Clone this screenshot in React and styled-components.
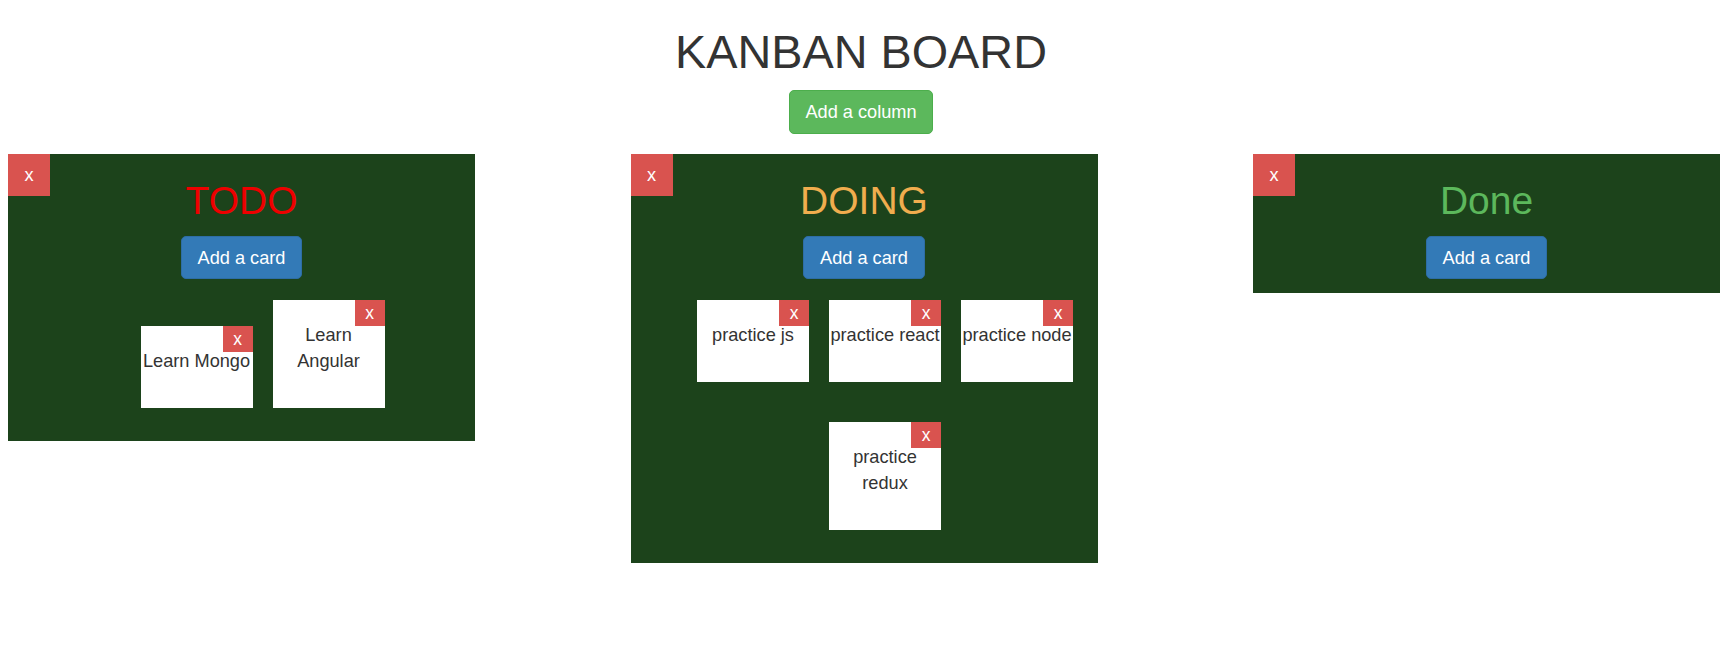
import React from 'react';
import styled, { createGlobalStyle } from 'styled-components';

const colors = {
	board_green: '#1c431b',
	text_black: '#333333',
	danger: '#d9534f',
	primary: '#337ab7',
	success: '#5cb85c',
	warning: '#f0ad4e',
	white: '#ffffff',
};

const columns = [
	{ id: 'todo', title: 'TODO', color: '#ee0000', cards: ['Learn Mongo', 'Learn Angular'] },
	{
		id: 'doing',
		title: 'DOING',
		color: colors.warning,
		cards: ['practice js', 'practice react', 'practice node', 'practice redux'],
	},
	{ id: 'done', title: 'Done', color: colors.success, cards: [] },
];

const GlobalStyle = createGlobalStyle`
	html, body {
		margin: 0;
		padding: 0;
		background: ${colors.white};
	}
	body {
		font-family: "Liberation Sans", Arial, Helvetica, sans-serif;
		color: ${colors.text_black};
	}
	* {
		box-sizing: border-box;
	}
`;

const App = () => {
	return (
		<Page>
			<GlobalStyle />
			<Header>
				<BoardTitle>KANBAN BOARD</BoardTitle>
				<Button $variant="success">Add a column</Button>
			</Header>
			<Board>
				{columns.map((col) => (
					<Column key={col.id}>
						<ColumnDelete>x</ColumnDelete>
						<ColumnTitle $color={col.color}>{col.title}</ColumnTitle>
						<Button $variant="primary">Add a card</Button>
						<CardList>
							{col.cards.map((text) => (
								<Card key={text}>
									<CardTop>
										<CardDelete>x</CardDelete>
									</CardTop>
									<CardText>{text}</CardText>
								</Card>
							))}
						</CardList>
					</Column>
				))}
			</Board>
		</Page>
	);
};
export default App;

const Page = styled.div`
	width: 1722px;
	min-height: 666px;
`;

const Header = styled.div`
	text-align: center;
	padding-bottom: 20px;
`;

const BoardTitle = styled.h1`
	margin: 27px 0 12px;
	font-size: 46.8px;
	font-weight: normal;
	line-height: 1.1;
	color: ${colors.text_black};
`;

const variants = {
	success: { bg: colors.success, border: '#4cae4c' },
	primary: { bg: colors.primary, border: '#2e6da4' },
};

const Button = styled.button`
	display: inline-block;
	height: 43.5px;
	padding: 0 15.6px;
	border-radius: 5px;
	border: solid 1.3px ${(p) => variants[p.$variant].border};
	background-color: ${(p) => variants[p.$variant].bg};
	color: ${colors.white};
	font-family: inherit;
	font-size: 18.2px;
	line-height: 26px;
	cursor: pointer;
`;

const Board = styled.div`
	display: flex;
	align-items: flex-start;
	gap: 155.5px;
	padding: 0 0 0 8px;
`;

const Column = styled.div`
	position: relative;
	width: 467px;
	padding-bottom: 14px;
	background-color: ${colors.board_green};
	text-align: center;
`;

const ColumnDelete = styled.button`
	position: absolute;
	top: 0;
	left: 0;
	width: 42px;
	height: 42px;
	padding: 0;
	border: none;
	background-color: ${colors.danger};
	color: ${colors.white};
	font-family: inherit;
	font-size: 18.2px;
	line-height: 42px;
	cursor: pointer;
`;

const ColumnTitle = styled.h2`
	margin: 26px 0 13px;
	font-size: 39px;
	font-weight: normal;
	line-height: 1.1;
	color: ${(p) => p.$color};
`;

const CardList = styled.div`
	display: flex;
	flex-wrap: wrap;
	justify-content: center;
	align-items: flex-end;
	padding-left: 42px;
`;

const Card = styled.div`
	width: 112px;
	margin: 20.5px 10px 19px;
	padding-bottom: 34.5px;
	background-color: ${colors.white};
	color: ${colors.text_black};
`;

const CardTop = styled.div`
	display: flex;
	justify-content: flex-end;
	align-items: flex-start;
	height: 22px;
`;

const CardDelete = styled.button`
	position: relative;
	width: 30px;
	height: 26px;
	padding: 0;
	border: none;
	background-color: ${colors.danger};
	color: ${colors.white};
	font-family: inherit;
	font-size: 17.5px;
	line-height: 24px;
	cursor: pointer;
`;

const CardText = styled.div`
	font-size: 18.2px;
	line-height: 26px;
	text-align: center;
`;
